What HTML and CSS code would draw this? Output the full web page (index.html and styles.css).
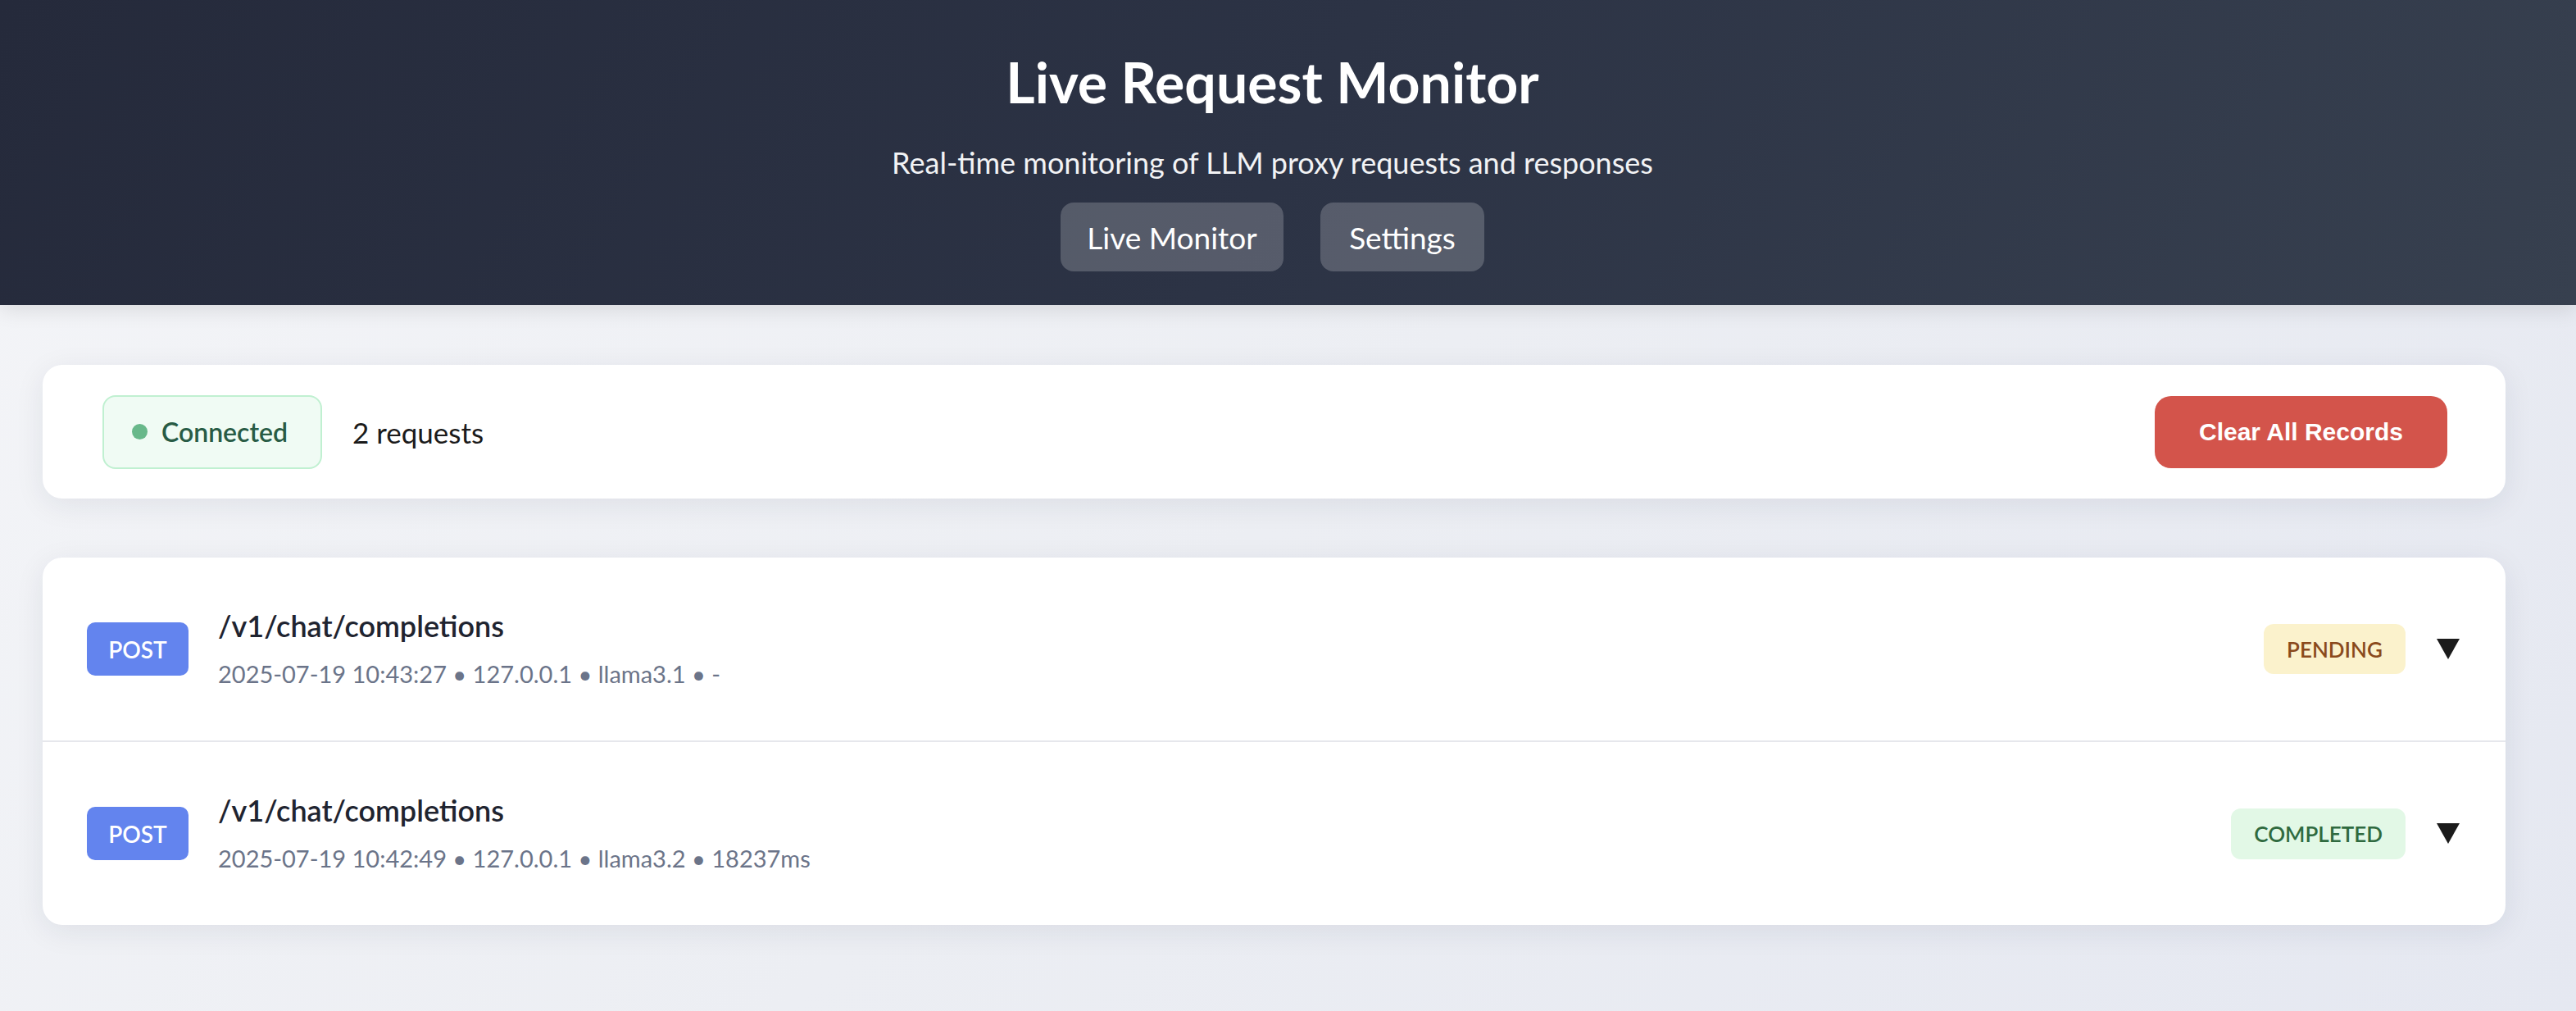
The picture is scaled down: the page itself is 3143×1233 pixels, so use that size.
FILE: index.html
```html
<!DOCTYPE html>
<html lang="en">
<head>
<meta charset="utf-8">
<title>Live Request Monitor</title>
<link rel="stylesheet" href="styles.css">
</head>
<body>
<header class="hero">
  <h1 class="hero-title">Live Request Monitor</h1>
  <p class="hero-sub">Real-time monitoring of LLM proxy requests and responses</p>
  <nav class="hero-nav">
    <a class="nav-btn nav-live">Live Monitor</a>
    <a class="nav-btn nav-settings">Settings</a>
  </nav>
</header>
<main class="main">
  <section class="card status-card">
    <div class="status-left">
      <div class="conn-badge"><span class="conn-dot"></span><span class="conn-text">Connected</span></div>
      <span class="req-count">2 requests</span>
    </div>
    <button class="clear-btn">Clear All Records</button>
  </section>
  <section class="card list-card">
    <div class="req-row">
      <span class="method">POST</span>
      <div class="req-info">
        <div class="req-path">/v1/chat/completions</div>
        <div class="req-meta">2025-07-19 10:43:27 • 127.0.0.1 • llama3.1 • -</div>
      </div>
      <span class="status status-pending">PENDING</span>
      <svg class="chev" width="28" height="25" viewBox="0 0 28 25"><polygon points="0,0 28,0 14,25" fill="#1b1b1b"/></svg>
    </div>
    <div class="req-row">
      <span class="method">POST</span>
      <div class="req-info">
        <div class="req-path">/v1/chat/completions</div>
        <div class="req-meta">2025-07-19 10:42:49 • 127.0.0.1 • llama3.2 • 18237ms</div>
      </div>
      <span class="status status-done">COMPLETED</span>
      <svg class="chev" width="28" height="25" viewBox="0 0 28 25"><polygon points="0,0 28,0 14,25" fill="#1b1b1b"/></svg>
    </div>
  </section>
</main>
</body>
</html>
```
FILE: styles.css
```css
* { box-sizing: border-box; }
html, body { margin: 0; padding: 0; }
body {
  font-family: Lato, "Noto Sans", sans-serif;
  background: linear-gradient(135deg, #f4f5f8 0%, #eceef3 50%, #e5e8f1 100%);
  min-height: 1233px;
  color: #1a1a1a;
}
.hero {
  height: 372px;
  background: linear-gradient(120deg, #252a3b 0%, #2c3345 50%, #37404f 100%);
  box-shadow: 0 6px 24px rgba(0, 0, 0, 0.10);
  display: flex;
  flex-direction: column;
  align-items: center;
  padding: 58px 38px 0 0;
  color: #fff;
}
.hero-title {
  margin: 0;
  font-size: 68px;
  font-weight: 700;
  line-height: 84px;
}
.hero-sub {
  margin: 34px 0 0;
  font-size: 36px;
  line-height: 44px;
  font-weight: 400;
  color: #f2f3f5;
}
.hero-nav {
  display: flex;
  gap: 45px;
  margin-top: 27px;
}
.nav-btn {
  height: 84px;
  display: flex;
  align-items: center;
  justify-content: center;
  background: rgba(255, 255, 255, 0.2);
  border-radius: 16px;
  font-size: 37px;
  color: #fff;
}
.nav-live { width: 272px; }
.nav-settings { width: 200px; }
.main {
  padding: 73px 86px 0 52px;
  display: flex;
  flex-direction: column;
  gap: 72px;
}
.card {
  background: #fff;
  border-radius: 24px;
  box-shadow: 0 8px 36px rgba(30, 40, 70, 0.08);
}
.status-card {
  height: 163px;
  display: flex;
  align-items: center;
  justify-content: space-between;
  padding: 0 71px 0 73px;
}
.status-left {
  display: flex;
  align-items: center;
  gap: 37px;
}
.conn-badge {
  width: 268px;
  height: 90px;
  display: flex;
  align-items: center;
  gap: 17px;
  padding-left: 34px;
  background: #f0fbf4;
  border: 2px solid #c0f0d1;
  border-radius: 16px;
}
.conn-dot {
  width: 19px;
  height: 19px;
  border-radius: 50%;
  background: #68b88a;
}
.conn-text {
  font-size: 32px;
  font-weight: 600;
  color: #285b45;
}
.req-count {
  font-size: 35px;
  color: #1b1b1b;
}
.clear-btn {
  width: 357px;
  height: 88px;
  border: none;
  border-radius: 20px;
  background: #d3544b;
  color: #fff;
  font-family: "Liberation Sans", Arial, sans-serif;
  font-weight: 700;
  font-size: 30px;
}
.list-card {
  overflow: hidden;
}
.req-row {
  height: 223px;
  display: flex;
  align-items: center;
  padding: 0 56px 0 54px;
}
.req-row + .req-row {
  border-top: 2px solid #e6e7ec;
  height: 225px;
}
.method {
  width: 124px;
  height: 65px;
  display: flex;
  align-items: center;
  justify-content: center;
  background: #6384ee;
  color: #fff;
  border-radius: 10px;
  font-size: 28px;
  font-weight: 600;
}
.req-info {
  flex: 1;
  margin-left: 36px;
  display: flex;
  flex-direction: column;
}
.req-path {
  font-size: 36px;
  font-weight: 600;
  color: #1f2430;
  line-height: 40px;
}
.req-meta {
  margin-top: 20px;
  font-size: 29px;
  color: #6b7489;
  line-height: 38px;
}
.status {
  height: 61px;
  display: flex;
  align-items: center;
  padding: 0 28px;
  border-radius: 12px;
  font-size: 26px;
  font-weight: 600;
}
.status-pending { background: #fbf2cc; color: #8a4a1c; }
.status-done { background: #e2f8e6; color: #2f6a3f; height: 62px; }
.chev { margin-left: 38px; flex: none; }
```
